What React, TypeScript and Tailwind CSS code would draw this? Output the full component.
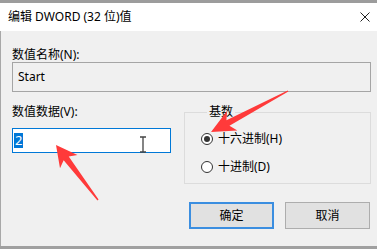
import React from "react";

function arrowPoints(tx: number, ty: number, px: number, py: number, L: number, W: number) {
  const dx = px - tx;
  const dy = py - ty;
  const len = Math.hypot(dx, dy);
  const ux = dx / len;
  const uy = dy / len;
  const nx = -uy;
  const ny = ux;
  const bx = px - ux * L;
  const by = py - uy * L;
  const jx = px - ux * L * 0.8;
  const jy = py - uy * L * 0.8;
  const sw = 3.2;
  const tw = 0.7;
  const pts: [number, number][] = [
    [px, py],
    [bx + nx * W, by + ny * W],
    [jx + nx * sw, jy + ny * sw],
    [tx + nx * tw, ty + ny * tw],
    [tx - nx * tw, ty - ny * tw],
    [jx - nx * sw, jy - ny * sw],
    [bx - nx * W, by - ny * W],
  ];
  return pts.map((p) => p.join(",")).join(" ");
}

const font = { fontFamily: '"Noto Sans", "Noto Sans CJK SC", sans-serif' };

function Radio({ checked, label }: { checked: boolean; label: string }) {
  return (
    <div className="flex items-center h-[16px]">
      <span className="w-[12px] h-[12px] rounded-full border border-[#333333] bg-white flex items-center justify-center">
        {checked && <span className="w-[6px] h-[6px] rounded-full bg-[#333333]" />}
      </span>
      <span className="ml-[5px] text-[12px] leading-[16px] text-black">{label}</span>
    </div>
  );
}

export default function App() {
  return (
    <div className="relative w-[377px] h-[249px] flex flex-col overflow-hidden bg-[#f0f0f0]" style={font}>
      <div className="h-[3px] bg-[#9c9c9c]" />
      <div className="h-[28px] bg-white flex items-center justify-between pl-[8px] pr-[6px]">
        <span className="text-[12px] leading-[16px] text-black">编辑 DWORD (32 位)值</span>
        <svg width="10" height="10" viewBox="0 0 10 10" className="mr-[1px]">
          <path d="M0.5 0.5 L9.5 9.5 M9.5 0.5 L0.5 9.5" stroke="#222" strokeWidth="1" />
        </svg>
      </div>
      <div className="flex-1 flex flex-col bg-[#f0f0f0] border-l border-[#a8a8a8] pl-[11px] pr-[6px]">
        <div className="mt-[17px] text-[12px] leading-[14px] text-black">数值名称(N):</div>
        <div className="h-[30px] border border-[#a5a5a5] bg-[#f0f0f0] flex items-center pl-[5px] text-[12px] text-black">
          Start
        </div>
        <div className="flex items-start mt-[13px]">
          <div className="w-[159px] flex flex-col">
            <div className="text-[12px] leading-[14px] text-black">数值数据(V):</div>
            <div className="mt-[9px] h-[25px] border border-[#0078d7] bg-white flex items-center pl-[1px]">
              <span className="bg-[#0078d7] text-white text-[13px] leading-[15px] px-[1px]">2</span>
            </div>
          </div>
          <fieldset className="ml-[13px] flex-1 border border-[#dcdcdc] pl-[16px] pb-[8px]">
            <legend className="ml-[6px] px-[2px] text-[12px] leading-[14px] text-black">基数</legend>
            <div className="mt-[12px] flex flex-col gap-[12px]">
              <Radio checked label="十六进制(H)" />
              <Radio checked={false} label="十进制(D)" />
            </div>
          </fieldset>
        </div>
        <div className="mt-[18px] flex justify-end gap-[11px] mr-[1px]">
          <div className="w-[85px] h-[27px] border-2 border-[#3b8ee0] bg-[#e1e1e1] flex items-center justify-center text-[12px] text-black">
            确定
          </div>
          <div className="w-[85px] h-[27px] border border-[#adadad] bg-[#e1e1e1] flex items-center justify-center text-[12px] text-black">
            取消
          </div>
        </div>
      </div>
      <div className="h-[3px] bg-[#a0a0a0]" />
      <svg className="absolute left-0 top-0 pointer-events-none" width="377" height="249" viewBox="0 0 377 249">
        <g stroke="#444" strokeWidth="1.3" fill="none">
          <path d="M140 137 L146 137 M143 137 L143 152 M140 152 L146 152" />
        </g>
        <polygon points={arrowPoints(288, 91, 211, 132, 24, 11)} fill="#ff3a3a" />
        <polygon points={arrowPoints(98, 200, 56, 145, 21, 11)} fill="#ff3a3a" />
      </svg>
    </div>
  );
}
